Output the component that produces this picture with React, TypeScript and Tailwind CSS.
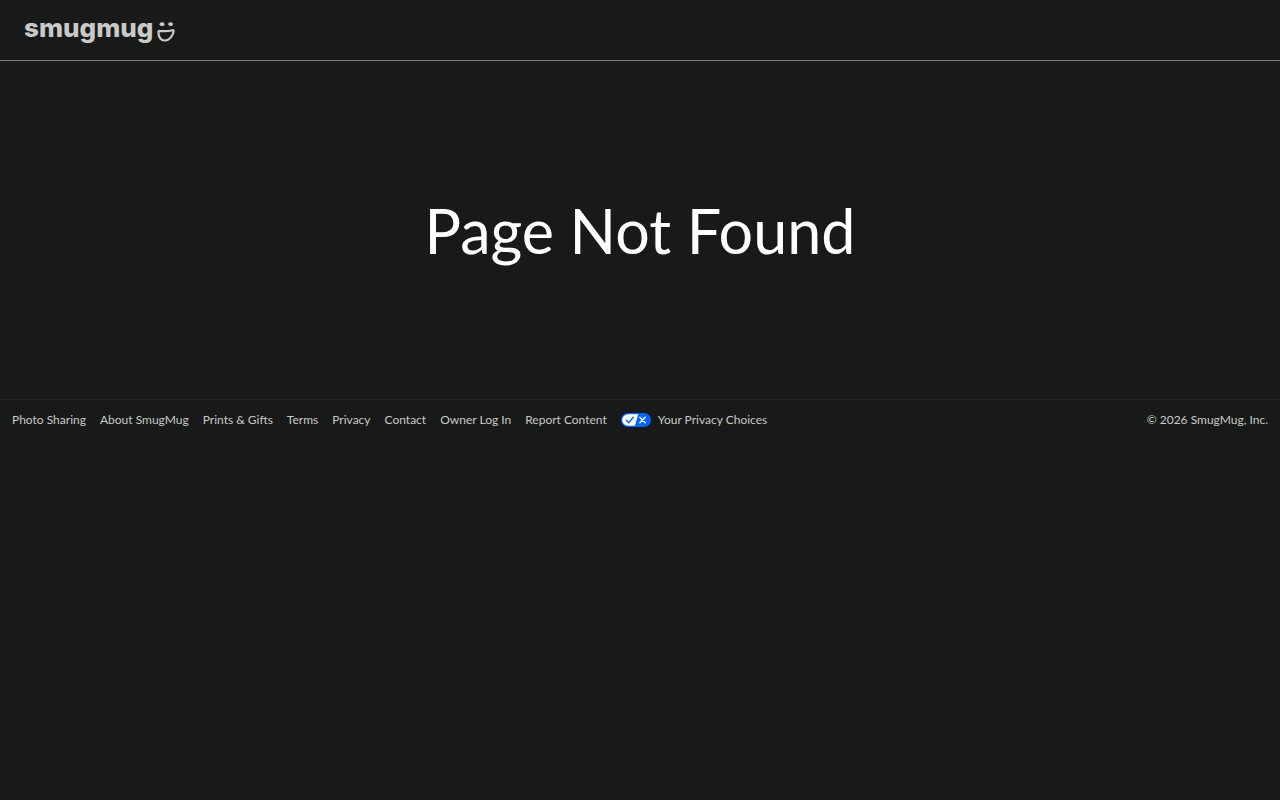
const footerLinks = [
  "Photo Sharing",
  "About SmugMug",
  "Prints & Gifts",
  "Terms",
  "Privacy",
  "Contact",
  "Owner Log In",
  "Report Content",
];

function SmileIcon() {
  return (
    <svg className="h-5 w-[18px]" viewBox="0 0 18 20" fill="none" aria-hidden="true">
      <ellipse cx="5" cy="2.2" rx="2.5" ry="1.9" fill="#c8c9c8" />
      <ellipse cx="13.600" cy="2.1" rx="2.5" ry="1.9" fill="#c8c9c8" />
      <path
        d="M2.6 8.900C7 9.400 11.600 9.200 15.500 8.200C16.300 8 16.800 8.600 16.600 9.400C15.700 14.100 12.500 18.300 8.200 18.500C4 18.700 1.300 15 1.400 10C1.400 9.200 1.900 8.800 2.600 8.900Z"
        stroke="#c8c9c8"
        strokeWidth="2.200"
      />
    </svg>
  );
}

function PrivacyChoicesIcon() {
  return (
    <svg className="h-[14px] w-[30px]" viewBox="0 0 30 14" fill="none" aria-hidden="true">
      <rect width="30" height="14" rx="7" fill="#0066ff" />
      <path d="M7 1.200H17.200L14 12.800H7A5.800 5.800 0 0 1 7 1.200Z" fill="#fff" />
      <path d="M5.300 7.300L7.800 9.700L12.300 4.300" stroke="#0066ff" strokeWidth="1.400" strokeLinecap="round" strokeLinejoin="round" />
      <path d="M18.800 4.300L24.200 9.700M24.200 4.300L18.800 9.700" stroke="#fff" strokeWidth="1.400" strokeLinecap="round" />
    </svg>
  );
}

function Header() {
  return (
    <header className="flex items-start border-b border-[#7b7d7c] px-6 pt-[14px] pb-[18px]">
      <a href="#" aria-label="SmugMug" className="flex items-end gap-1 text-[#c8c9c8]">
        <span className="font-['Inter',sans-serif] text-[26px] leading-7 font-extrabold">smugmug</span>
        <SmileIcon />
      </a>
    </header>
  );
}

function Footer() {
  return (
    <footer className="flex items-center justify-between border-t border-[#272928] p-3 text-xs text-[#c8c9c8]">
      <nav className="flex items-center gap-3.5">
        {footerLinks.map((label) => (
          <a key={label} href="#" className="hover:text-white">
            {label}
          </a>
        ))}
        <a href="#" className="flex items-center gap-[7px] hover:text-white">
          <PrivacyChoicesIcon />
          Your Privacy Choices
        </a>
      </nav>
      <p>© 2026 SmugMug, Inc.</p>
    </footer>
  );
}

function App() {
  return (
    <div className="min-h-screen bg-[#181a19] font-['Lato',sans-serif]">
      <Header />
      <main className="px-6 pt-[134px] pb-[132px]">
        <h1 className="text-center text-[61px] leading-[72px] text-white">Page Not Found</h1>
      </main>
      <Footer />
    </div>
  );
}

export default App;
